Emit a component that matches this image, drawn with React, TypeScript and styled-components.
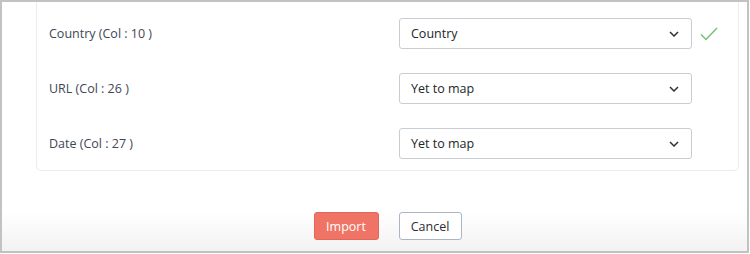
import styled, { createGlobalStyle } from 'styled-components';

const GlobalStyle = createGlobalStyle`
	html, body {
		margin: 0;
		padding: 0;
		background: #ffffff;
	}
	body {
		font-family: 'Open Sans', 'Liberation Sans', sans-serif;
	}
`;

const mappings = [
	{ label: 'Country (Col : 10 )', value: 'Country', mapped: true },
	{ label: 'URL (Col : 26 )', value: 'Yet to map', mapped: false },
	{ label: 'Date (Col : 27 )', value: 'Yet to map', mapped: false },
];

export default function App() {
	return (
		<>
			<GlobalStyle />
			<Frame>
				<MappingCard>
					{mappings.map((m) => (
						<MappingRow key={m.label}>
							<ColumnLabel>{m.label}</ColumnLabel>
							<Select>
								<span>{m.value}</span>
								<svg width="10" height="6" viewBox="0 0 10 6">
									<path
										d="M1 1 L5 5 L9 1"
										fill="none"
										stroke="#2e3135"
										strokeWidth="1.5"
									/>
								</svg>
							</Select>
							<Status>
								{m.mapped && (
									<svg width="18" height="14" viewBox="0 0 18 14">
										<path
											d="M1 7.5 L6 12.5 L17 1"
											fill="none"
											stroke="#72c377"
											strokeWidth="1.5"
										/>
									</svg>
								)}
							</Status>
						</MappingRow>
					))}
				</MappingCard>
				<Footer>
					<Button variant="primary">Import</Button>
					<Button variant="secondary">Cancel</Button>
				</Footer>
			</Frame>
		</>
	);
}

const Frame = styled.div`
	box-sizing: border-box;
	width: 749px;
	height: 253px;
	border: 2px solid #c2c2c2;
	display: flex;
	flex-direction: column;
	background: linear-gradient(to bottom, #ffffff 0%, #ffffff 84%, #f2f2f2 100%);
`;

const MappingCard = styled.div`
	box-sizing: border-box;
	margin: 0 8px 0 34px;
	padding: 16px 0 11px 12px;
	border: 1px solid #e9edf2;
	border-top: none;
	border-radius: 0 0 5px 5px;
	background: #ffffff;
	display: flex;
	flex-direction: column;
	gap: 24px;
`;

const MappingRow = styled.div`
	display: flex;
	align-items: center;
	height: 31px;
`;

const ColumnLabel = styled.div`
	width: 350px;
	font-size: 12.5px;
	color: #3e4756;
`;

const Select = styled.div`
	box-sizing: border-box;
	width: 293px;
	height: 31px;
	border: 1px solid #c8ccd3;
	border-radius: 3px;
	padding: 0 12px 0 11px;
	display: flex;
	align-items: center;
	justify-content: space-between;
	font-size: 12.5px;
	color: #222629;
`;

const Status = styled.div`
	width: 18px;
	margin-left: 8px;
	display: flex;
	align-items: center;
`;

const Footer = styled.div`
	display: flex;
	justify-content: center;
	gap: 20px;
	margin: 41px 8px 0 34px;
`;

const Button = styled.button<{ variant: 'primary' | 'secondary' }>`
	box-sizing: border-box;
	height: 28px;
	width: ${({ variant }) => (variant === 'primary' ? '65px' : '63px')};
	padding: 0;
	border-radius: 3px;
	font-family: 'Open Sans', 'Liberation Sans', sans-serif;
	font-size: 12.5px;
	cursor: pointer;
	color: ${({ variant }) => (variant === 'primary' ? '#ffffff' : '#2a2d31')};
	background: ${({ variant }) => (variant === 'primary' ? '#ef7466' : '#ffffff')};
	border: 1px solid ${({ variant }) => (variant === 'primary' ? '#e0675a' : '#aab6c7')};
`;
